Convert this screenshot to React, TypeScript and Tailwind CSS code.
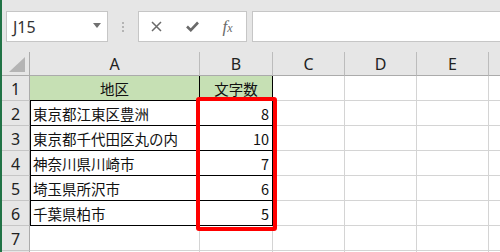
import React from "react";

const rows: { a: string; b: string }[] = [
  { a: "東京都江東区豊洲", b: "8" },
  { a: "東京都千代田区丸の内", b: "10" },
  { a: "神奈川県川崎市", b: "7" },
  { a: "埼玉県所沢市", b: "6" },
  { a: "千葉県柏市", b: "5" },
];

function RowHead({ n }: { n: string }) {
  return (
    <div className="flex items-center justify-center bg-[#e6e6e6] border-r border-b border-r-[#ababab] border-b-[#c6c6c6] text-[16px] text-[#222] font-['Noto_Sans',sans-serif] pt-[1px]">
      {n}
    </div>
  );
}

function Blank() {
  return <div className="bg-white border-r border-b border-[#d4d4d4]" />;
}

export default function App() {
  return (
    <div className="relative w-[500px] h-[252px] overflow-hidden bg-[#e6e6e6] border-l-2 border-[#217346] font-['Noto_Sans_CJK_JP',sans-serif]">
      {/* toolbar */}
      <div className="flex items-start h-[52px] pt-[11px]">
        <div className="ml-[4px] w-[102px] h-[31px] shrink-0 bg-white border border-[#c6c6c6] flex items-center justify-between pl-[6px] pr-[6px]">
          <span className="text-[16px] text-[#333] font-['Noto_Sans',sans-serif] leading-none pt-[1px]">J15</span>
          <svg width="8" height="5" viewBox="0 0 8 5" className="mt-[-2px]">
            <polygon points="0,0 8,0 4,5" fill="#707070" />
          </svg>
        </div>
        <div className="w-[30px] h-[31px] shrink-0 flex flex-col items-center justify-center gap-[2px]">
          <div className="w-[2px] h-[2px] bg-[#b4b4b4]" />
          <div className="w-[2px] h-[2px] bg-[#b4b4b4]" />
          <div className="w-[2px] h-[2px] bg-[#b4b4b4]" />
        </div>
        <div className="w-[109px] h-[31px] shrink-0 bg-white border border-[#c6c6c6] flex items-center">
          <div className="w-[37px] flex justify-center ml-[-1px]">
            <svg width="11" height="11" viewBox="0 0 11 11">
              <path d="M1 1 L10 10 M10 1 L1 10" stroke="#6a6a6a" strokeWidth="1.5" fill="none" />
            </svg>
          </div>
          <div className="w-[35px] flex justify-center">
            <svg width="13" height="11" viewBox="0 0 13 11">
              <path d="M1 5.5 L4.8 9.2 L12 1.5" stroke="#6a6a6a" strokeWidth="2.6" fill="none" />
            </svg>
          </div>
          <div className="w-[35px] flex justify-center">
            <span className="font-['Liberation_Serif',serif] italic text-[#6a6a6a] text-[17px] leading-none">
              f<span className="text-[12px]">x</span>
            </span>
          </div>
        </div>
        <div className="ml-[5px] w-[260px] h-[31px] shrink-0 bg-white border border-[#c6c6c6]" />
      </div>

      {/* grid */}
      <div className="grid grid-cols-[28px_170px_73px_72px_72px_72px_40px] grid-rows-[24px_25px_25px_25px_25px_25px_25px_25px_25px] bg-white">
        {/* header row */}
        <div className="relative bg-[#e6e6e6] border-r border-b border-[#ababab]">
          <svg width="17" height="16" viewBox="0 0 17 16" className="absolute left-[7px] top-[5px]">
            <polygon points="16,0 16,15 0,15" fill="#b4b4b4" />
          </svg>
        </div>
        {["A", "B", "C", "D", "E", ""].map((c, i) => (
          <div
            key={i}
            className="flex items-center justify-center bg-[#e6e6e6] border-r border-b border-r-[#bcbcbc] border-b-[#ababab] text-[16px] text-[#222] font-['Noto_Sans',sans-serif]"
          >
            {c}
          </div>
        ))}

        {/* row 1 */}
        <RowHead n="1" />
        <div className="flex items-center justify-center bg-[#c6e0b4] border-r border-b border-black text-[14.5px] text-[#111] pt-[1px]">
          地区
        </div>
        <div className="flex items-center justify-center bg-[#c6e0b4] border-r border-b border-black text-[14.5px] text-[#111] pt-[1px]">
          文字数
        </div>
        <Blank />
        <Blank />
        <Blank />
        <Blank />

        {rows.map((r, i) => (
          <React.Fragment key={i}>
            <RowHead n={String(i + 2)} />
            <div className="flex items-center bg-white border-l border-r border-b border-black pl-[2px] text-[14.5px] text-[#111] pt-[1px] whitespace-nowrap">
              {r.a}
            </div>
            <div className="flex items-center justify-end bg-white border-r border-b border-black pr-[3px] text-[14.5px] text-[#111] pt-[1px]">
              {r.b}
            </div>
            <Blank />
            <Blank />
            <Blank />
            <Blank />
          </React.Fragment>
        ))}

        {["7", ""].map((n, k) => (
          <React.Fragment key={k}>
            <RowHead n={n} />
            <Blank />
            <Blank />
            <Blank />
            <Blank />
            <Blank />
            <Blank />
          </React.Fragment>
        ))}
      </div>

      {/* red highlight */}
      <div className="absolute left-[194px] top-[97px] w-[81px] h-[134px] border-4 border-[#ff0000] rounded-[3px]" />
    </div>
  );
}
